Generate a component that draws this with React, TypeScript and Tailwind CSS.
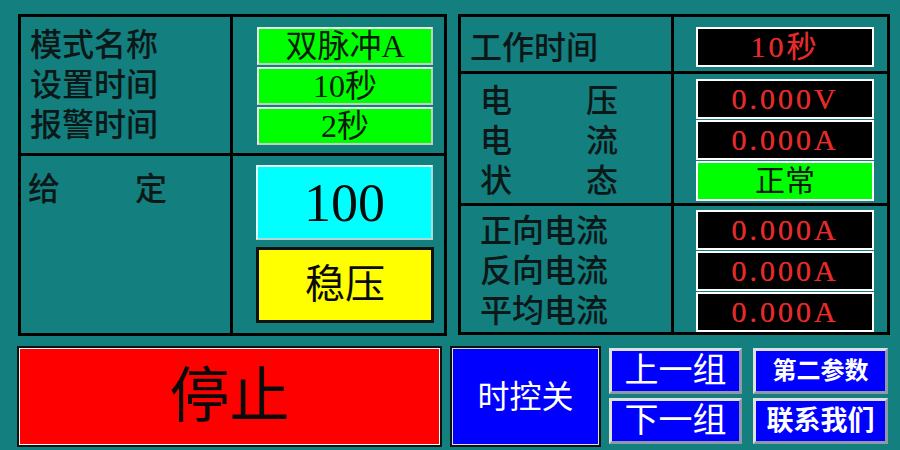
import React from "react";

const F = "font-['Liberation_Serif','Noto_Sans_CJK_SC',serif]";

function GreenCell({ children }: { children: React.ReactNode }) {
  return (
    <div className="h-[38px] w-[176px] bg-[#00ff00] border-2 border-t-[#e8f0e8] border-l-[#e8f0e8] border-r-[#c0d0c0] border-b-[#c0d0c0] flex items-center justify-center text-[32px] leading-none text-[#0a1a0a]">
      {children}
    </div>
  );
}

function BlackCell({ children }: { children: React.ReactNode }) {
  return (
    <div className="h-[40px] w-[178px] shrink-0 bg-black border-2 border-white flex items-center justify-center text-[30px] font-normal leading-none text-[#e42a2a] tracking-[3px] [text-shadow:0_0_0.6px_#e42a2a]">
      {children}
    </div>
  );
}

function SmallBtn({ children, size }: { children: React.ReactNode; size: string }) {
  return (
    <div
      className={`h-[46px] bg-[#0000ff] border-[3px] border-t-[#e0e0e0] border-l-[#e0e0e0] border-r-[#9098a8] border-b-[#9098a8] flex items-center justify-center text-white leading-none ${size}`}
    >
      {children}
    </div>
  );
}

export default function App() {
  return (
    <div className={`w-[900px] h-[450px] bg-[#137f7f] ${F} text-[#0c1818] pt-[14px]`}>
      <div className="flex h-[322px] font-medium">
        {/* Left panel */}
        <div className="ml-[18px] w-[429px] h-[322px] border-[3px] border-black grid grid-cols-[212px_1fr] grid-rows-[139px_1fr]">
          <div className="border-r-[3px] border-b-[3px] border-black pl-[9px] pt-[12px] flex flex-col gap-[8px] text-[32px] leading-[32px]">
            <div>模式名称</div>
            <div>设置时间</div>
            <div>报警时间</div>
          </div>
          <div className="border-b-[3px] border-black pl-[24px] pt-[10px] flex flex-col gap-[2px] font-normal">
            <GreenCell>双脉冲A</GreenCell>
            <GreenCell>10秒</GreenCell>
            <GreenCell>2秒</GreenCell>
          </div>
          <div className="border-r-[3px] border-black pl-[7px] pt-[17px] text-[32px] leading-[32px] flex">
            <span className="w-[107px]">给</span>
            <span>定</span>
          </div>
          <div className="pl-[23px] pt-[9px] flex flex-col gap-[7px] font-normal">
            <div className="h-[75px] w-[177px] bg-[#00ffff] border-2 border-t-[#e0ffff] border-l-[#e0ffff] border-r-[#b0d8d8] border-b-[#b0d8d8] flex items-center justify-center text-[54px] leading-none text-[#0a0a0a]">
              100
            </div>
            <div className="h-[76px] w-[178px] bg-[#ffff00] border-[3px] border-[#101010] flex items-center justify-center text-[40px] leading-none text-[#0a0a0a]">
              稳压
            </div>
          </div>
        </div>

        {/* Right panel */}
        <div className="ml-[11px] w-[432px] h-[321px] border-[3px] border-black grid grid-cols-[213px_1fr] grid-rows-[57px_132px_1fr]">
          <div className="border-r-[3px] border-b-[3px] border-black pl-[9px] pt-[15px] text-[32px] leading-[32px]">
            工作时间
          </div>
          <div className="border-b-[3px] border-black pl-[22px] pt-[10px]">
            <BlackCell>10秒</BlackCell>
          </div>
          <div className="border-r-[3px] border-b-[3px] border-black pl-[19px] pt-[11px] flex flex-col gap-[8px] text-[32px] leading-[32px]">
            <div className="flex"><span className="w-[106px]">电</span><span>压</span></div>
            <div className="flex"><span className="w-[106px]">电</span><span>流</span></div>
            <div className="flex"><span className="w-[106px]">状</span><span>态</span></div>
          </div>
          <div className="border-b-[3px] border-black pl-[22px] pt-[5px] flex flex-col gap-[1px]">
            <BlackCell>0.000V</BlackCell>
            <BlackCell>0.000A</BlackCell>
            <div className="h-[40px] w-[178px] bg-[#00ff00] border-2 border-white flex items-center justify-center text-[30px] font-normal leading-none text-[#0a1a0a]">
              正常
            </div>
          </div>
          <div className="border-r-[3px] border-black pl-[19px] pt-[9px] flex flex-col gap-[8px] text-[32px] leading-[32px]">
            <div>正向电流</div>
            <div>反向电流</div>
            <div>平均电流</div>
          </div>
          <div className="pl-[22px] pt-[4px] flex flex-col gap-[1px]">
            <BlackCell>0.000A</BlackCell>
            <BlackCell>0.000A</BlackCell>
            <BlackCell>0.000A</BlackCell>
          </div>
        </div>
      </div>

      {/* Bottom row */}
      <div className="flex mt-[10px] h-[101px]">
        <div className="ml-[17px] w-[425px] h-[101px] border-2 border-[#101010] bg-white p-[1px]">
          <div className="w-full h-full bg-[#ff0000] flex items-center justify-center text-[60px] leading-none text-[#0a0a0a]">
            停止
          </div>
        </div>
        <div className="ml-[8px] w-[151px] h-[101px] border-2 border-[#101010] bg-[#e0e0e0] p-[1px]">
          <div className="w-full h-full bg-[#0000ff] flex items-center justify-center text-[32px] leading-none text-white">
            时控关
          </div>
        </div>
        <div className="ml-[8px] w-[133px] flex flex-col gap-[4px] pt-[2px]">
          <SmallBtn size="text-[34px]">上一组</SmallBtn>
          <SmallBtn size="text-[34px]">下一组</SmallBtn>
        </div>
        <div className="ml-[11px] w-[135px] flex flex-col gap-[4px] pt-[2px]">
          <SmallBtn size="text-[24px] font-bold">第二参数</SmallBtn>
          <SmallBtn size="text-[27px] font-bold">联系我们</SmallBtn>
        </div>
      </div>
    </div>
  );
}
